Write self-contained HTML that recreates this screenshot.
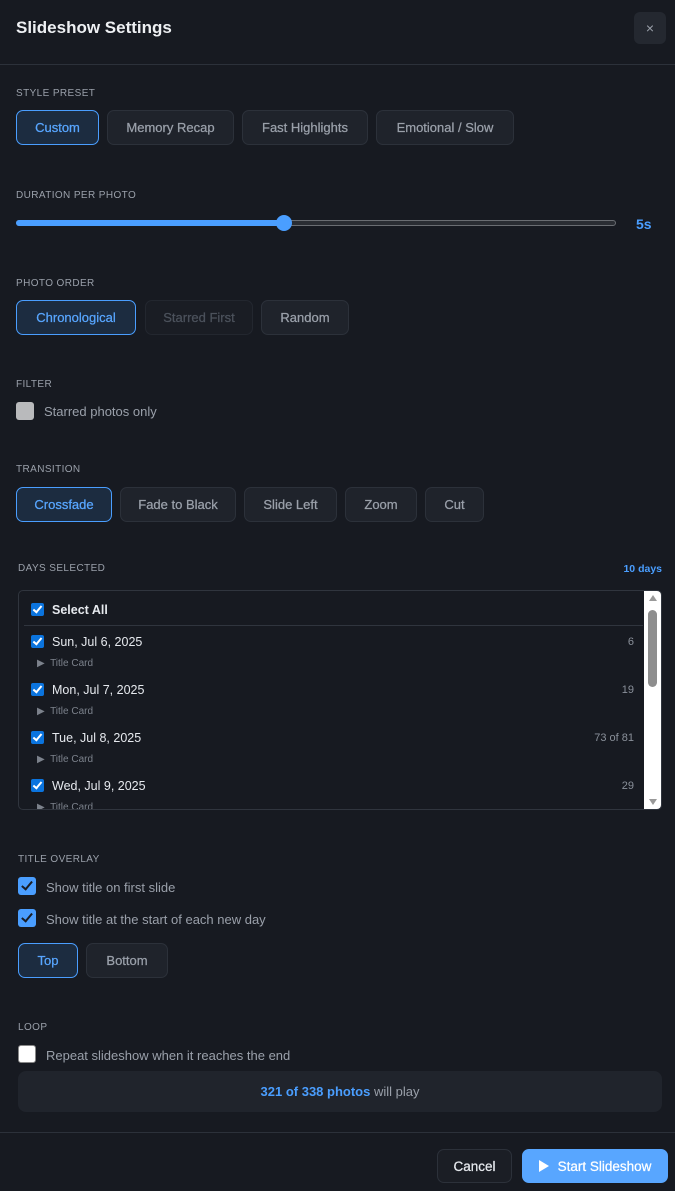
<!DOCTYPE html>
<html><head><meta charset="utf-8"><style>
*{box-sizing:border-box;margin:0;padding:0}
body{width:675px;height:1191px;background:#171a21;font-family:"Liberation Sans",sans-serif;color:#c9ced6;position:relative;overflow:hidden}
.a{position:absolute}
.lbl{position:absolute;font-size:10px;letter-spacing:.4px;color:#9aa0aa;text-transform:uppercase}
.btn{position:absolute;height:35px;border:1px solid #2c313a;background:#1f232b;border-radius:7px;font-size:13px;color:#9aa0aa;display:flex;align-items:center;justify-content:center;font-weight:500;-webkit-text-stroke:.25px currentColor}
.on{background:#1c2c40;border-color:#4a9eff;color:#58a6ff}
.dis{background:#1a1d24;border-color:#23272f;color:#4c525c}
.cb{position:absolute;width:13px;height:13px;background:#0b74de;border-radius:2px}
.cb:after{content:"";position:absolute;left:4px;top:1px;width:3px;height:7px;border:solid #fff;border-width:0 2px 2px 0;transform:rotate(40deg)}
.cb2{position:absolute;width:18px;height:18px;background:#4a9eff;border-radius:3px}
.cb2:after{content:"";position:absolute;left:6px;top:2px;width:4px;height:9px;border:solid #1a1d24;border-width:0 2.5px 2.5px 0;transform:rotate(40deg)}
.day{position:absolute;left:52px;font-size:12.5px;color:#e6e9ee}
.cnt{position:absolute;right:41px;font-size:11px;color:#8a909a}
.tc{position:absolute;left:37px;font-size:10px;color:#7c828c}
.t{position:absolute;font-size:13px;color:#9aa0aa}
</style></head><body>
<div class="a" style="left:16px;top:18px;font-size:17px;font-weight:bold;color:#eef0f3">Slideshow Settings</div>
<div class="a" style="left:634px;top:12px;width:32px;height:32px;background:#242830;border-radius:6px;color:#9aa0aa;font-size:14px;display:flex;align-items:center;justify-content:center">×</div>
<div class="a" style="left:0;top:64px;width:675px;height:1px;background:#2c313a"></div>

<div class="lbl" style="left:16px;top:88px">Style Preset</div>
<div class="btn on" style="left:16px;top:110px;width:83px">Custom</div>
<div class="btn" style="left:107px;top:110px;width:127px">Memory Recap</div>
<div class="btn" style="left:242px;top:110px;width:126px">Fast Highlights</div>
<div class="btn" style="left:376px;top:110px;width:138px">Emotional / Slow</div>

<div class="lbl" style="left:16px;top:190px">Duration per photo</div>
<div class="a" style="left:16px;top:220px;width:600px;height:6px;border-radius:3px;background:#2a2d33;border:1px solid #6a6d72"></div>
<div class="a" style="left:16px;top:220px;width:268px;height:6px;border-radius:3px;background:#4a9eff"></div>
<div class="a" style="left:276px;top:215px;width:16px;height:16px;border-radius:50%;background:#4a9eff"></div>
<div class="a" style="left:636px;top:216px;font-size:14px;font-weight:bold;color:#4a9eff">5s</div>

<div class="lbl" style="left:16px;top:278px">Photo Order</div>
<div class="btn on" style="left:16px;top:300px;width:120px">Chronological</div>
<div class="btn dis" style="left:145px;top:300px;width:108px">Starred First</div>
<div class="btn" style="left:261px;top:300px;width:88px">Random</div>

<div class="lbl" style="left:16px;top:379px">Filter</div>
<div class="a" style="left:16px;top:402px;width:18px;height:18px;background:#b9babc;border-radius:3px"></div>
<div class="t" style="left:44px;top:404px">Starred photos only</div>

<div class="lbl" style="left:16px;top:464px">Transition</div>
<div class="btn on" style="left:16px;top:487px;width:96px">Crossfade</div>
<div class="btn" style="left:120px;top:487px;width:116px">Fade to Black</div>
<div class="btn" style="left:244px;top:487px;width:93px">Slide Left</div>
<div class="btn" style="left:345px;top:487px;width:72px">Zoom</div>
<div class="btn" style="left:425px;top:487px;width:59px">Cut</div>

<div class="lbl" style="left:18px;top:563px">Days Selected</div>
<div class="a" style="right:13px;top:563px;font-size:10.5px;font-weight:bold;color:#4a9eff">10 days</div>

<div class="a" style="left:18px;top:590px;width:644px;height:220px;border:1px solid #30353e;border-radius:5px;overflow:hidden">
 <div class="a" style="right:0;top:0;width:17px;height:220px;background:#fff"></div>
 <div class="a" style="right:4px;top:19px;width:9px;height:77px;background:#8e8e8e;border-radius:5px"></div>
 <div class="a" style="right:4px;top:4px;width:0;height:0;border:4px solid transparent;border-bottom:6px solid #999;border-top:0"></div>
 <div class="a" style="right:4px;bottom:4px;width:0;height:0;border:4px solid transparent;border-top:6px solid #999;border-bottom:0"></div>
 <div class="a" style="left:5px;top:34px;width:619px;height:1px;background:#30353e"></div>
</div>
<div class="cb" style="left:31px;top:603px"></div><div class="day" style="top:603px;font-weight:bold">Select All</div>
<div class="cb" style="left:31px;top:635px"></div><div class="day" style="top:635px">Sun, Jul 6, 2025</div><div class="cnt" style="top:636px">6</div>
<div class="tc" style="top:658px">▶&nbsp; Title Card</div>
<div class="cb" style="left:31px;top:683px"></div><div class="day" style="top:683px">Mon, Jul 7, 2025</div><div class="cnt" style="top:684px">19</div>
<div class="tc" style="top:706px">▶&nbsp; Title Card</div>
<div class="cb" style="left:31px;top:731px"></div><div class="day" style="top:731px">Tue, Jul 8, 2025</div><div class="cnt" style="top:732px">73 of 81</div>
<div class="tc" style="top:754px">▶&nbsp; Title Card</div>
<div class="cb" style="left:31px;top:779px"></div><div class="day" style="top:779px">Wed, Jul 9, 2025</div><div class="cnt" style="top:780px">29</div>
<div class="a" style="left:19px;top:800px;width:620px;height:9px;overflow:hidden"><div class="tc" style="left:18px;top:2px">▶&nbsp; Title Card</div></div>

<div class="lbl" style="left:18px;top:854px">Title Overlay</div>
<div class="cb2" style="left:18px;top:877px"></div><div class="t" style="left:46px;top:880px">Show title on first slide</div>
<div class="cb2" style="left:18px;top:909px"></div><div class="t" style="left:46px;top:912px">Show title at the start of each new day</div>
<div class="btn on" style="left:18px;top:943px;width:60px">Top</div>
<div class="btn" style="left:86px;top:943px;width:82px">Bottom</div>

<div class="lbl" style="left:18px;top:1022px">Loop</div>
<div class="a" style="left:18px;top:1045px;width:18px;height:18px;background:#fff;border-radius:3px;border:1px solid #888"></div>
<div class="t" style="left:46px;top:1048px">Repeat slideshow when it reaches the end</div>
<div class="a" style="left:18px;top:1071px;width:644px;height:41px;background:#20242c;border-radius:8px;font-size:13px;color:#9aa0aa;display:flex;align-items:center;justify-content:center"><b style="color:#4a9eff">321 of 338 photos</b>&nbsp;will play</div>

<div class="a" style="left:0;top:1132px;width:675px;height:1px;background:#2c313a"></div>
<div class="btn" style="left:437px;top:1149px;width:75px;height:34px;color:#e6e9ee;background:#1b1e25;font-size:13.5px">Cancel</div>
<div class="btn" style="left:522px;top:1149px;width:146px;height:34px;background:#58a6ff;border-color:#58a6ff;color:#fff;font-size:13.5px"><span style="display:inline-block;width:0;height:0;border-left:10px solid #fff;border-top:6px solid transparent;border-bottom:6px solid transparent;margin-right:9px"></span>Start Slideshow</div>
</body></html>
